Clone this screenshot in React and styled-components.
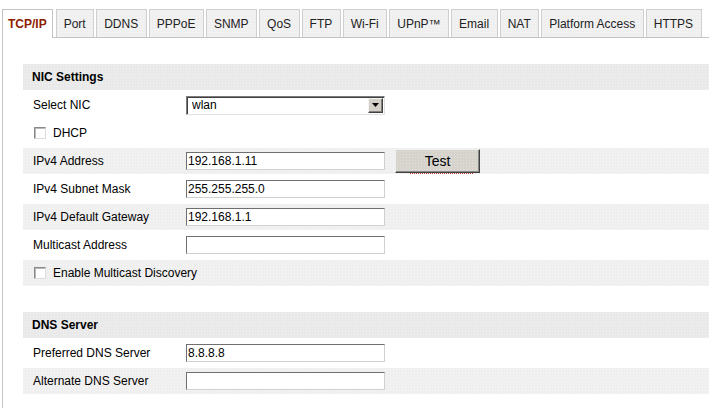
import React from "react";
import styled, { createGlobalStyle, css } from "styled-components";

const GlobalStyle = createGlobalStyle`
  html, body { margin: 0; padding: 0; background: #fff; }
  body {
    font-family: "Liberation Sans", Arial, sans-serif;
    font-size: 12px;
    color: #000;
    overflow: hidden;
  }
`;

const dotted = (base, dot) => css`
  background-color: ${base};
  background-image: radial-gradient(${dot} 0.6px, transparent 0.8px);
  background-size: 3px 3px;
`;

const Page = styled.div`
  width: 709px;
  height: 408px;
  padding: 9px 0 0 2px;
  box-sizing: border-box;
  display: flex;
  flex-direction: column;
  overflow: hidden;
`;

const TabBar = styled.div`
  display: flex;
  align-items: flex-end;
  gap: 2px;
  height: 28px;
  border-bottom: 1px solid #c4c4c4;
  flex-shrink: 0;
`;

const Tab = styled.div`
  box-sizing: border-box;
  height: ${(p) => (p.$active ? "29px" : "28px")};
  margin-bottom: ${(p) => (p.$active ? "-1px" : "0")};
  margin-right: ${(p) => (p.$active ? "1px" : "0")};
  padding: ${(p) => (p.$active ? "0 5px 1px 5px" : "0 7.5px 0 7px")};
  display: flex;
  align-items: center;
  border: 1px solid ${(p) => (p.$active ? "#c4c4c4" : "#cfcfcf")};
  border-bottom: none;
  font-size: 12px;
  white-space: nowrap;
  color: ${(p) => (p.$active ? "#8e1c00" : "#222")};
  font-weight: ${(p) => (p.$active ? "bold" : "normal")};
  ${(p) => (p.$active ? css`background: #fff;` : dotted("#efefef", "#f8f8f8"))}
`;

const Panel = styled.div`
  flex: 1;
  border-left: 1px solid #c4c4c4;
  padding: 26px 0 0 20px;
  display: flex;
  flex-direction: column;
  gap: 26px;
`;

const Section = styled.section`
  display: flex;
  flex-direction: column;
  gap: 2px;
`;

const SectionHeader = styled.div`
  height: 26px;
  display: flex;
  align-items: center;
  padding-left: 9px;
  font-weight: bold;
  font-size: 12px;
  color: #000;
  ${dotted("#e9e9e9", "#f3f3f3")}
`;

const Row = styled.div`
  height: 26px;
  display: flex;
  align-items: center;
  padding-left: 10px;
  ${(p) => (p.$shaded ? dotted("#efefef", "#f7f7f7") : css`background: #fff;`)}
`;

const Label = styled.label`
  width: 153px;
  flex-shrink: 0;
  color: #000;
`;

const CheckLabel = styled.label`
  display: flex;
  align-items: center;
  gap: 7px;
  padding-left: 1px;
  color: #000;
`;

const Check = styled.input.attrs({ type: "checkbox" })`
  appearance: none;
  margin: 0;
  width: 12px;
  height: 12px;
  box-sizing: border-box;
  background: #fff;
  border: 1px solid;
  border-color: #8a8a8a #dcdcdc #dcdcdc #8a8a8a;
  box-shadow: inset 1px 1px 0 #b8b8b8;
`;

const TextInput = styled.input.attrs({ type: "text" })`
  box-sizing: border-box;
  width: 199px;
  height: 18px;
  margin: 0;
  padding: 0 2px 0 1px;
  font-family: "Liberation Sans", Arial, sans-serif;
  font-size: 12px;
  color: #000;
  background: #fff;
  border: 1px solid;
  border-color: #6f6f6f #d0d0d0 #d0d0d0 #6f6f6f;
  outline: none;
`;

const SelectWrap = styled.div`
  position: relative;
  width: 199px;
  height: 19px;
  box-sizing: border-box;
  border: 1px solid;
  border-color: #7c7c7c #e0e0e0 #e0e0e0 #7c7c7c;
  box-shadow: inset 1px 1px 0 #404040;
  background: #fff;
`;

const Select = styled.select`
  appearance: none;
  width: 100%;
  height: 100%;
  border: none;
  background: transparent;
  margin: 0;
  padding: 0 0 0 5px;
  font-family: "Liberation Sans", Arial, sans-serif;
  font-size: 12px;
  color: #000;
  outline: none;
`;

const ArrowButton = styled.span`
  position: absolute;
  top: 1px;
  right: 1px;
  width: 15px;
  height: 15px;
  box-sizing: border-box;
  background: #d4d0c8;
  border: 1px solid;
  border-color: #f4f4f4 #404040 #404040 #f4f4f4;
  box-shadow: inset -1px -1px 0 #808080;
  display: flex;
  align-items: center;
  justify-content: center;
  pointer-events: none;
`;

const Button = styled.button`
  position: relative;
  margin: 0 0 0 10px;
  width: 85px;
  height: 24px;
  box-sizing: border-box;
  font-family: "Liberation Sans", Arial, sans-serif;
  font-size: 14px;
  color: #000;
  border: 1px solid;
  border-color: #f0f0f0 #404040 #404040 #f0f0f0;
  box-shadow: inset -1px -1px 0 #8a8a8a;
  ${dotted("#d6d3cd", "#e2e0dc")}
  padding: 0 0 1px 0;
  &::after {
    content: "";
    position: absolute;
    left: 14px;
    right: 6px;
    bottom: -2px;
    border-bottom: 1px dotted #c43a2a;
  }
`;

const nicRows = [
  { type: "select", label: "Select NIC", value: "wlan" },
  { type: "check", label: "DHCP" },
  { type: "input", label: "IPv4 Address", value: "192.168.1.11", shaded: true, button: "Test" },
  { type: "input", label: "IPv4 Subnet Mask", value: "255.255.255.0" },
  { type: "input", label: "IPv4 Default Gateway", value: "192.168.1.1", shaded: true },
  { type: "input", label: "Multicast Address", value: "" },
  { type: "check", label: "Enable Multicast Discovery", shaded: true },
];

const dnsRows = [
  { type: "input", label: "Preferred DNS Server", value: "8.8.8.8" },
  { type: "input", label: "Alternate DNS Server", value: "", shaded: true },
];

const tabs = [
  "TCP/IP", "Port", "DDNS", "PPPoE", "SNMP", "QoS", "FTP", "Wi-Fi",
  "UPnP™", "Email", "NAT", "Platform Access", "HTTPS",
];

function FieldRow({ row }) {
  if (row.type === "check") {
    return (
      <Row $shaded={row.shaded}>
        <CheckLabel>
          <Check />
          {row.label}
        </CheckLabel>
      </Row>
    );
  }
  return (
    <Row $shaded={row.shaded}>
      <Label>{row.label}</Label>
      {row.type === "select" ? (
        <SelectWrap>
          <Select defaultValue={row.value}>
            <option value="wlan">wlan</option>
            <option value="lan">lan</option>
          </Select>
          <ArrowButton>
            <svg width="7" height="4" viewBox="0 0 7 4">
              <path d="M0 0H7L3.5 4Z" fill="#000" />
            </svg>
          </ArrowButton>
        </SelectWrap>
      ) : (
        <TextInput defaultValue={row.value} />
      )}
      {row.button && <Button>{row.button}</Button>}
    </Row>
  );
}

export default function App() {
  return (
    <>
      <GlobalStyle />
      <Page>
        <TabBar>
          {tabs.map((t, i) => (
            <Tab key={t} $active={i === 0}>
              {t}
            </Tab>
          ))}
        </TabBar>
        <Panel>
          <Section>
            <SectionHeader>NIC Settings</SectionHeader>
            {nicRows.map((r) => (
              <FieldRow key={r.label} row={r} />
            ))}
          </Section>
          <Section>
            <SectionHeader>DNS Server</SectionHeader>
            {dnsRows.map((r) => (
              <FieldRow key={r.label} row={r} />
            ))}
          </Section>
        </Panel>
      </Page>
    </>
  );
}
